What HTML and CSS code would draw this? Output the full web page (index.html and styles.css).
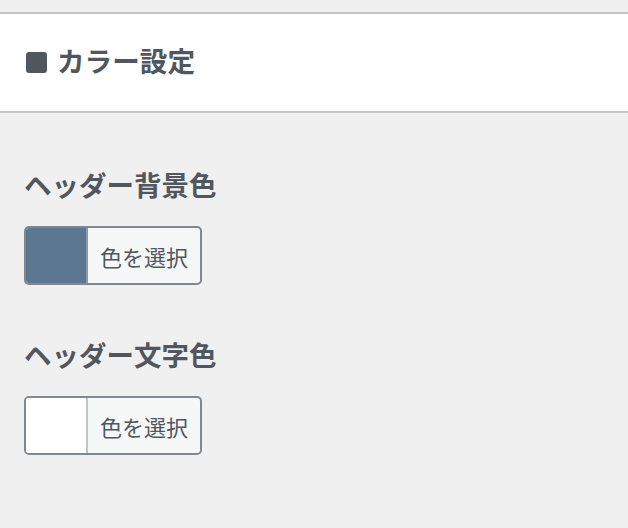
FILE: index.html
```html
<!DOCTYPE html>
<html lang="ja">
<head>
<meta charset="utf-8">
<link rel="stylesheet" href="styles.css">
</head>
<body>
<div class="top-gap"></div>
<div class="section-head">
  <span class="sq"></span>
  <h3 class="section-title">カラー設定</h3>
</div>
<div class="controls">
  <div class="control">
    <div class="label">ヘッダー背景色</div>
    <button class="color-result">
      <span class="swatch swatch-blue"></span>
      <span class="result-text">色を選択</span>
    </button>
  </div>
  <div class="control">
    <div class="label">ヘッダー文字色</div>
    <button class="color-result">
      <span class="swatch swatch-white"></span>
      <span class="result-text">色を選択</span>
    </button>
  </div>
</div>
</body>
</html>
```
FILE: styles.css
```css
html, body {
  margin: 0;
  padding: 0;
  background: #f0f0f1;
  font-family: "Noto Sans CJK JP", "Noto Sans", sans-serif;
  color: #50575e;
}
.top-gap {
  height: 12px;
}
.section-head {
  box-sizing: border-box;
  height: 101px;
  background: #ffffff;
  border-top: 2px solid #c3c4c7;
  border-bottom: 2px solid #c3c4c7;
  display: flex;
  align-items: center;
  padding-left: 26px;
  gap: 10px;
}
.sq {
  display: block;
  width: 21px;
  height: 21px;
  border-radius: 3px;
  background: #50575e;
}
.section-title {
  margin: 0 0 5px;
  font-size: 27.6px;
  font-weight: 700;
  line-height: 36px;
  color: #50575e;
}
.controls {
  padding: 53px 0 0 24px;
  display: flex;
  flex-direction: column;
  gap: 51px;
}
.control {
  display: flex;
  flex-direction: column;
  align-items: flex-start;
  gap: 24px;
}
.label {
  font-size: 27.5px;
  font-weight: 700;
  line-height: 36px;
}
.color-result {
  box-sizing: border-box;
  display: flex;
  width: 178px;
  height: 59px;
  padding: 0;
  margin: 0;
  border: 2px solid #7e8993;
  border-radius: 5px;
  overflow: hidden;
  background: #f6f7f7;
  font-family: inherit;
  cursor: pointer;
}
.swatch {
  display: block;
  width: 60px;
  height: 100%;
  border-right: 2px solid #c3c4c7;
}
.swatch-blue {
  background: #5b7791;
  border-right-color: #8c9aa8;
}
.swatch-white {
  background: #ffffff;
}
.result-text {
  flex: 1;
  display: flex;
  align-items: center;
  justify-content: center;
  font-size: 22px;
  color: #50575e;
}
```
